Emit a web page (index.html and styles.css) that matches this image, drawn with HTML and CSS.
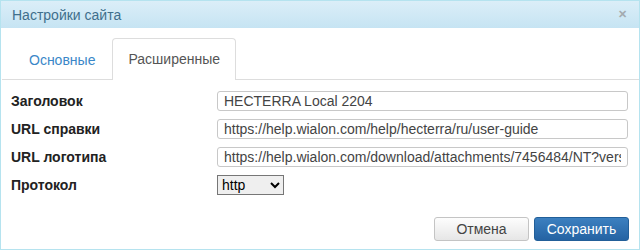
FILE: index.html
```html
<!DOCTYPE html>
<html lang="ru">
<head>
    <meta charset="UTF-8">
    <title>Настройки сайта</title>
    <link rel="stylesheet" href="styles.css">
</head>
<body>
    <div class="dialog">
        <div class="dialog-header">
            <span class="dialog-title">Настройки сайта</span>
            <span class="dialog-close">&#x2715;</span>
        </div>
        <div class="tabs">
            <a class="tab" href="#">Основные</a>
            <a class="tab active" href="#">Расширенные</a>
        </div>
        <div class="form">
            <div class="row">
                <label for="title">Заголовок</label>
                <input type="text" id="title" value="HECTERRA Local 2204">
            </div>
            <div class="row">
                <label for="help">URL справки</label>
                <input type="text" id="help" value="https://help.wialon.com/help/hecterra/ru/user-guide">
            </div>
            <div class="row">
                <label for="logo">URL логотипа</label>
                <input type="text" id="logo" value="https://help.wialon.com/download/attachments/7456484/NT?version=1">
            </div>
            <div class="row">
                <label for="proto">Протокол</label>
                <select id="proto">
                    <option>http</option>
                    <option>https</option>
                </select>
            </div>
        </div>
        <div class="buttons">
            <button class="btn">Отмена</button>
            <button class="btn primary">Сохранить</button>
        </div>
    </div>
</body>
</html>
```

FILE: styles.css
```css
body {
    margin: 0;
    font-family: "Liberation Sans", Arial, sans-serif;
    font-size: 14px;
    color: #333;
}
.dialog {
    width: 638px;
    height: 248px;
    border: 1px solid #b5e3ef;
    background: #fff;
    display: flex;
    flex-direction: column;
}
.dialog-header {
    height: 27px;
    display: flex;
    align-items: center;
    justify-content: space-between;
    padding: 0 12px 0 11px;
    background: linear-gradient(#dbeef8, #c6e4f3);
}
.dialog-title {
    font-size: 14px;
    color: #3f6f8c;
}
.dialog-close {
    font-size: 11px;
    color: #a3abb0;
    font-weight: bold;
}
.tabs {
    display: flex;
    align-items: flex-end;
    margin-top: 11px;
    margin-left: 1px;
    padding-left: 10px;
    border-bottom: 1px solid #ddd;
    height: 40px;
}
.tab {
    font-size: 14px;
    text-decoration: none;
    color: #3a87c8;
    padding: 0 16px;
    line-height: 40px;
    border: 1px solid transparent;
    border-bottom: none;
    border-radius: 4px 4px 0 0;
    margin-bottom: -1px;
}
.tab.active {
    color: #555;
    background: #fff;
    border-color: #ddd;
    height: 41px;
    padding: 0 15px;
}
.form {
    padding: 7px 10px 0 10px;
}
.row {
    display: flex;
    align-items: center;
    height: 28px;
}
.row label {
    width: 206px;
    font-weight: bold;
    color: #222;
}
.row input {
    width: 411px;
    height: 20px;
    box-sizing: border-box;
    border: 1px solid #c8c8c8;
    border-radius: 3px;
    padding: 0 6px;
    font-family: "Liberation Sans", Arial, sans-serif;
    font-size: 14px;
    color: #444;
}
.row select {
    width: 67px;
    height: 20px;
    font-family: "Liberation Sans", Arial, sans-serif;
    font-size: 14px;
    border: 1px solid #767676;
    border-radius: 0;
}
.buttons {
    margin-top: auto;
    margin-bottom: 8px;
    display: flex;
    justify-content: flex-end;
    gap: 5px;
    padding-right: 10px;
}
.btn {
    width: 95px;
    height: 24px;
    border: 1px solid #c4c4c4;
    border-radius: 3px;
    background: linear-gradient(#fdfdfd, #e6e6e6);
    font-family: "Liberation Sans", Arial, sans-serif;
    font-size: 14px;
    color: #444;
}
.btn.primary {
    border-color: #225f99;
    background: linear-gradient(#3c80c0, #2563a3);
    color: #fff;
}
```
